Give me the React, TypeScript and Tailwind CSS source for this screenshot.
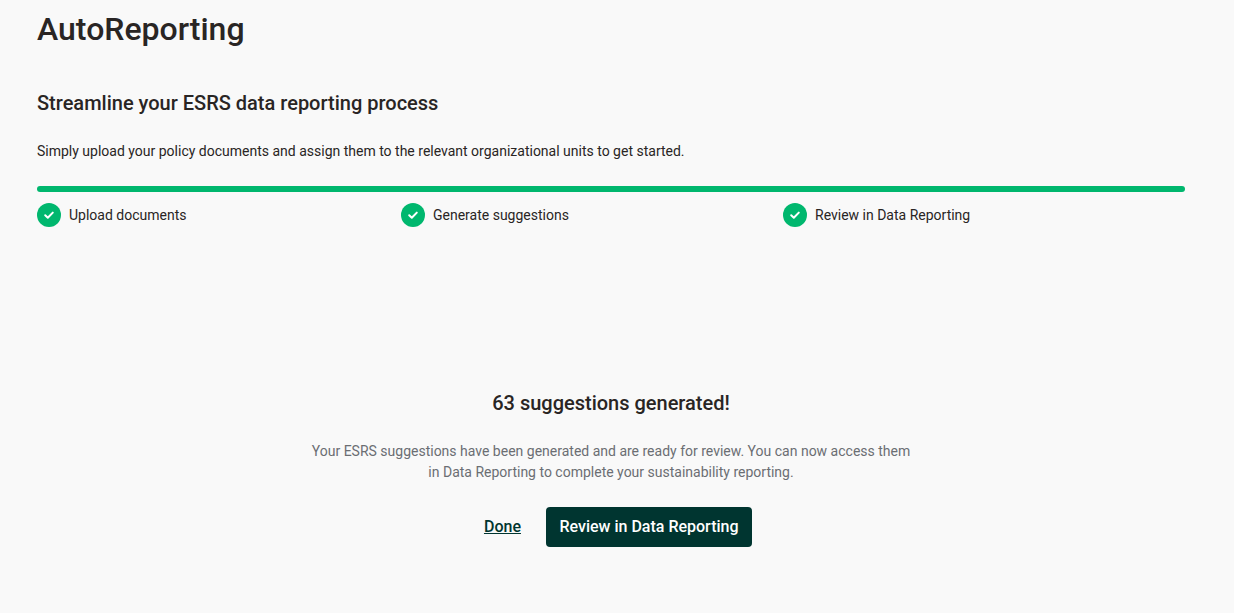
import React from "react";

function Step({ label, className }: { label: string; className: string }) {
  return (
    <div className={`flex items-center gap-2 ${className}`}>
      <span className="flex h-6 w-6 items-center justify-center rounded-full bg-[#00b76e]">
        <svg width="12" height="12" viewBox="0 0 12 12" fill="none" stroke="white" strokeWidth="2" strokeLinecap="round" strokeLinejoin="round">
          <path d="M2.2 6.3 4.8 8.8 9.8 3.6" />
        </svg>
      </span>
      <span className="text-sm leading-5 text-[#292524]">{label}</span>
    </div>
  );
}

export default function App() {
  return (
    <div className="h-[613px] overflow-hidden bg-[#f9f9f9] px-[37px] font-['Roboto',sans-serif] text-[#292524]">
      <h1 className="pt-[10px] text-[32px] font-medium leading-[38px]">AutoReporting</h1>
      <h2 className="mt-[41px] text-[20px] font-medium leading-[28px]">Streamline your ESRS data reporting process</h2>
      <p className="mt-[24px] text-sm leading-5">Simply upload your policy documents and assign them to the relevant organizational units to get started.</p>
      <div className="mt-[25px] h-[6px] w-[1148px] rounded-full bg-[#00b76e]" />
      <div className="mt-[11px] flex w-[1148px]">
        <Step label="Upload documents" className="w-[364px]" />
        <Step label="Generate suggestions" className="w-[382px]" />
        <Step label="Review in Data Reporting" className="" />
      </div>
      <div className="mt-[162px] flex w-[1148px] flex-col items-center">
        <h3 className="text-[20px] font-medium leading-[28px]">63 suggestions generated!</h3>
        <p className="mt-[24px] w-[610px] text-center text-sm leading-[21px] text-[#6b6e73]">
          Your ESRS suggestions have been generated and are ready for review. You can now access them in Data Reporting to complete your sustainability reporting.
        </p>
        <div className="mt-[24px] ml-[14px] flex items-center gap-[25px]">
          <button className="text-base font-medium leading-5 text-[#003530] underline">Done</button>
          <button className="h-10 rounded bg-[#003530] px-[13.5px] text-base font-medium leading-5 text-white">Review in Data Reporting</button>
        </div>
      </div>
    </div>
  );
}
